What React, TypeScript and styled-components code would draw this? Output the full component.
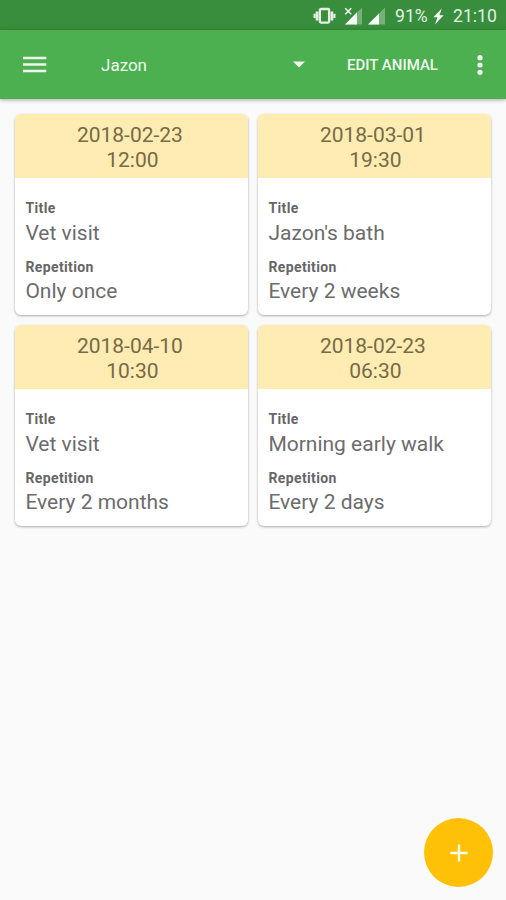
import React from "react";
import styled, { createGlobalStyle } from "styled-components";

const GlobalStyle = createGlobalStyle`
  * { box-sizing: border-box; }
  body { margin: 0; background: #fafafa; font-family: Roboto, "Noto Sans", sans-serif; }
`;

const Screen = styled.div`
  width: 506px;
  height: 900px;
  display: flex;
  flex-direction: column;
  background: #fafafa;
  overflow: hidden;
`;

const StatusBar = styled.div`
  height: 30px;
  flex: none;
  display: flex;
  align-items: center;
  justify-content: flex-end;
  padding: 2px 9px 0 0;
  background: #388e3c;
  color: #e4f0e4;
  font-size: 17.6px;
  line-height: 20px;
`;

const StatusIcon = styled.svg<{ $gap: number }>`
  display: block;
  flex: none;
  margin-right: ${(p) => p.$gap}px;
`;

const Battery = styled.span`
  width: 33px;
  margin-right: 5px;
  white-space: nowrap;
`;

const Clock = styled.span`
  width: 44px;
  white-space: nowrap;
`;

const Toolbar = styled.header`
  height: 69px;
  flex: none;
  display: flex;
  align-items: center;
  padding: 0 20px 0 23px;
  background: #4caf50;
  color: #fff;
  box-shadow: 0 1px 4px rgba(0, 0, 0, 0.34);
`;

const IconButton = styled.button`
  display: flex;
  padding: 0;
  border: 0;
  background: none;
  color: inherit;
`;

const AnimalSelect = styled.button`
  width: 204px;
  margin-left: 54px;
  padding: 0;
  display: flex;
  align-items: center;
  justify-content: space-between;
  border: 0;
  background: none;
  color: #f0faf0;
  font: 400 17px/20px Roboto, sans-serif;
`;

const EditButton = styled.button`
  width: 92px;
  margin: 0 38px 0 42px;
  padding: 0;
  border: 0;
  background: none;
  color: #eefaee;
  font: 500 15px/20px Roboto, sans-serif;
  white-space: nowrap;
  text-align: left;
`;

const CardGrid = styled.main`
  display: grid;
  grid-template-columns: 233px 233px;
  gap: 9.5px 10px;
  padding: 14.5px 14px 0 15.4px;
`;

const Card = styled.article`
  height: 201.5px;
  border-radius: 6px;
  overflow: hidden;
  background: #fff;
  box-shadow: 0 1px 2.5px rgba(0, 0, 0, 0.32);
`;

const CardDate = styled.div`
  height: 64.5px;
  padding-top: 9px;
  background: #ffecb3;
  color: #776a45;
  font-size: 21px;
  line-height: 25px;
  text-align: center;
`;

const DateLine = styled.div`
  padding-right: 4px;
`;

const TimeLine = styled.div`
  padding-left: 1px;
`;

const CardBody = styled.div`
  padding: 21px 10px 0;
`;

const Label = styled.div`
  color: #666;
  font-size: 14px;
  font-weight: 700;
  letter-spacing: 0.38px;
  line-height: 18px;
`;

const Value = styled.div`
  padding-top: 4px;
  color: #6c6c6c;
  font-size: 21px;
  line-height: 25px;
  white-space: nowrap;
`;

const Field = styled.div`
  height: 59px;

  &:last-child ${Value} {
    padding-top: 3px;
  }
`;

const AddButton = styled.button`
  position: absolute;
  left: 424px;
  top: 818px;
  width: 69px;
  height: 69px;
  padding: 0;
  display: flex;
  align-items: center;
  justify-content: center;
  border: 0;
  border-radius: 50%;
  background: #ffc107;
`;

const reminders = [
  { date: "2018-02-23", time: "12:00", title: "Vet visit", repetition: "Only once" },
  { date: "2018-03-01", time: "19:30", title: "Jazon's bath", repetition: "Every 2 weeks" },
  { date: "2018-04-10", time: "10:30", title: "Vet visit", repetition: "Every 2 months" },
  { date: "2018-02-23", time: "06:30", title: "Morning early walk", repetition: "Every 2 days" },
];

export default function App() {
  return (
    <Screen>
      <GlobalStyle />
      <StatusBar>
        <StatusIcon $gap={8} width="23" height="18" viewBox="0 0 23 18" fill="none" stroke="#e4f0e4">
          <rect x="6.9" y="2" width="9.2" height="13.6" rx="1" strokeWidth="2.3" />
          <path d="M4.1 4.4v9M18.9 4.4v9" strokeWidth="2.8" />
          <path d="M1.6 6.8v4.2M21.4 6.8v4.2" strokeWidth="2.2" />
        </StatusIcon>
        <StatusIcon $gap={6} width="18" height="18" viewBox="0 0 18 18">
          <path d="M18 0.5V17.5H1z" fill="#76b179" />
          <path d="M13 5.3V17.5H1z" fill="#f4faf4" />
          <path d="M1.2 1.2l6 6M7.2 1.2l-6 6" stroke="#388e3c" strokeWidth="4" />
          <path d="M1.2 1.2l6 6M7.2 1.2l-6 6" stroke="#f4faf4" strokeWidth="1.5" />
        </StatusIcon>
        <StatusIcon $gap={10} width="17" height="18" viewBox="0 0 17 18">
          <path d="M17 0.5V17.5H0z" fill="#76b179" />
          <path d="M11 6.5V17.5H0z" fill="#f4faf4" />
        </StatusIcon>
        <Battery>91%</Battery>
        <StatusIcon $gap={9} width="11" height="17" viewBox="0 0 11 17">
          <path d="M8.8 0.5L0.3 9.3h4.1L2 16.5l8.7-9.2H6.5z" fill="#f4faf4" />
        </StatusIcon>
        <Clock>21:10</Clock>
      </StatusBar>
      <Toolbar>
        <IconButton aria-label="Menu">
          <svg width="24" height="18" viewBox="0 0 24 18">
            <path d="M0 2h23.3M0 8.5h23.3M0 15h23.3" stroke="#eefaee" strokeWidth="2.7" />
          </svg>
        </IconButton>
        <AnimalSelect>
          <span>Jazon</span>
          <svg width="12" height="7" viewBox="0 0 12 7">
            <path d="M0 0.4h12L6 6.6z" fill="#f4fcf4" />
          </svg>
        </AnimalSelect>
        <EditButton>EDIT ANIMAL</EditButton>
        <IconButton aria-label="More options">
          <svg width="6" height="20" viewBox="0 0 6 20" fill="#f4fcf4">
            <circle cx="3" cy="2.7" r="2.6" />
            <circle cx="3" cy="10" r="2.6" />
            <circle cx="3" cy="17.3" r="2.6" />
          </svg>
        </IconButton>
      </Toolbar>
      <CardGrid>
        {reminders.map((r) => (
          <Card key={r.date + r.time}>
            <CardDate>
              <DateLine>{r.date}</DateLine>
              <TimeLine>{r.time}</TimeLine>
            </CardDate>
            <CardBody>
              <Field>
                <Label>Title</Label>
                <Value>{r.title}</Value>
              </Field>
              <Field>
                <Label>Repetition</Label>
                <Value>{r.repetition}</Value>
              </Field>
            </CardBody>
          </Card>
        ))}
      </CardGrid>
      <AddButton aria-label="Add reminder">
        <svg width="18" height="18" viewBox="0 0 18 18">
          <path d="M9 0.4v17.2M0.4 9h17.2" stroke="#fffbe8" strokeWidth="2.4" />
        </svg>
      </AddButton>
    </Screen>
  );
}
